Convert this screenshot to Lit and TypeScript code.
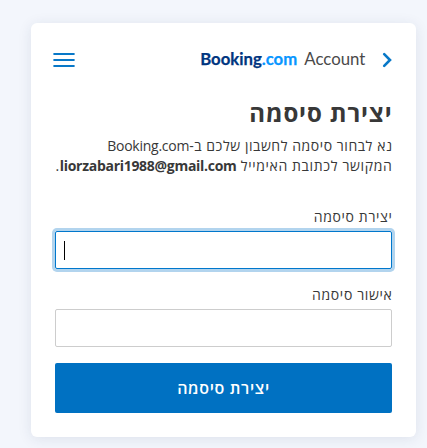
import { LitElement, html, css, svg } from "lit";
import { customElement } from "lit/decorators.js";

@customElement("app-root")
export class AppRoot extends LitElement {
  static styles = css`
    :host {
      display: block;
      box-sizing: border-box;
      height: 448px;
      padding: 23px 11px 11px 31px;
      overflow: hidden;
      background: #f3f6fc;
      color: #383838;
      font-family: "Open Sans", "Noto Sans", "DejaVu Sans", sans-serif;
      direction: rtl;
    }
    * { box-sizing: border-box; }
    .card {
      width: 385px;
      height: 414px;
      padding: 24px 24px 0;
      background: #fff;
      border-radius: 6px;
      box-shadow: 0 2px 14px rgba(30, 50, 90, 0.1);
    }
    header {
      display: flex;
      align-items: center;
      height: 26px;
      direction: ltr;
    }
    svg { display: block; flex: none; }
    .menu { margin-left: -2px; }
    .logo { margin-left: 124px; }
    .next { margin-left: auto; }
    .brand { font: 700 17px Lato, sans-serif; fill: #003580; stroke: #003580; stroke-width: 0.25px; }
    .brand .dot { fill: #0896ff; stroke: #0896ff; }
    .account { font: 400 17px Lato, sans-serif; fill: #4a4a4a; }
    h1 {
      margin: 24px 0 0;
      font-size: 24px;
      line-height: 32px;
      font-weight: 700;
      letter-spacing: 0.88px;
      white-space: nowrap;
    }
    p {
      margin: 7px 0 0;
      font-size: 14px;
      line-height: 20px;
      letter-spacing: 0.55px;
    }
    .line + .line { letter-spacing: 0.64px; }
    .line .latin { letter-spacing: -0.25px; }
    .line b.latin { letter-spacing: -0.29px; }
    .line { display: block; white-space: nowrap; }
    label {
      display: block;
      font-size: 14px;
      line-height: 20px;
      letter-spacing: 0.65px;
      white-space: nowrap;
    }
    h1, p, label { margin-right: -0.5px; }
    .first { margin-top: 31px; }
    .second { margin-top: 16px; }
    .field {
      display: flex;
      align-items: center;
      justify-content: flex-end;
      height: 38px;
      margin-top: 4px;
      padding-left: 8px;
      border: 1px solid #cdcdcd;
      border-radius: 2px;
    }
    .focused {
      border-color: #0077cc;
      box-shadow: 0 0 0 3px #b2d4ee;
    }
    .caret { width: 1px; height: 19px; background: #000; }
    button {
      display: block;
      width: 100%;
      height: 50px;
      margin-top: 16px;
      padding: 0;
      border: 0;
      border-radius: 2px;
      background: #0071c2;
      color: #fff;
      font: 600 16px "Open Sans", sans-serif;
      letter-spacing: 0.65px;
    }
  `;

  render() {
    return html`
      <main class="card">
        <header>
          <svg class="menu" width="22" height="26" viewBox="0 0 22 26">
            ${[6, 12, 18].map((y) => svg`<rect x="0.4" y=${y} width="21.2" height="2" rx="0.5" fill="#0878c8" />`)}
          </svg>
          <svg class="logo" width="168" height="26" viewBox="0 0 168 26">
            <text class="brand" x="1.2" y="17.5" textLength="97" lengthAdjust="spacingAndGlyphs"
              >Booking<tspan class="dot">.com</tspan></text>
            <text class="account" x="105.3" y="18" textLength="61" lengthAdjust="spacingAndGlyphs">Account</text>
          </svg>
          <svg class="next" width="10" height="26" viewBox="0 0 10 26">
            <path d="M2.2 7.2 8 13 2.2 18.8" fill="none" stroke="#0878c8" stroke-width="2.6" stroke-linecap="round" />
          </svg>
        </header>
        <h1>יצירת סיסמה</h1>
        <p>
          <span class="line">נא לבחור סיסמה לחשבון שלכם ב-<span class="latin">Booking.com</span></span>
          <span class="line">המקושר לכתובת האימייל <b class="latin">liorzabari1988@gmail.com</b>.</span>
        </p>
        <label class="first">יצירת סיסמה</label>
        <div class="field focused"><span class="caret"></span></div>
        <label class="second">אישור סיסמה</label>
        <div class="field"></div>
        <button>יצירת סיסמה</button>
      </main>
    `;
  }
}
